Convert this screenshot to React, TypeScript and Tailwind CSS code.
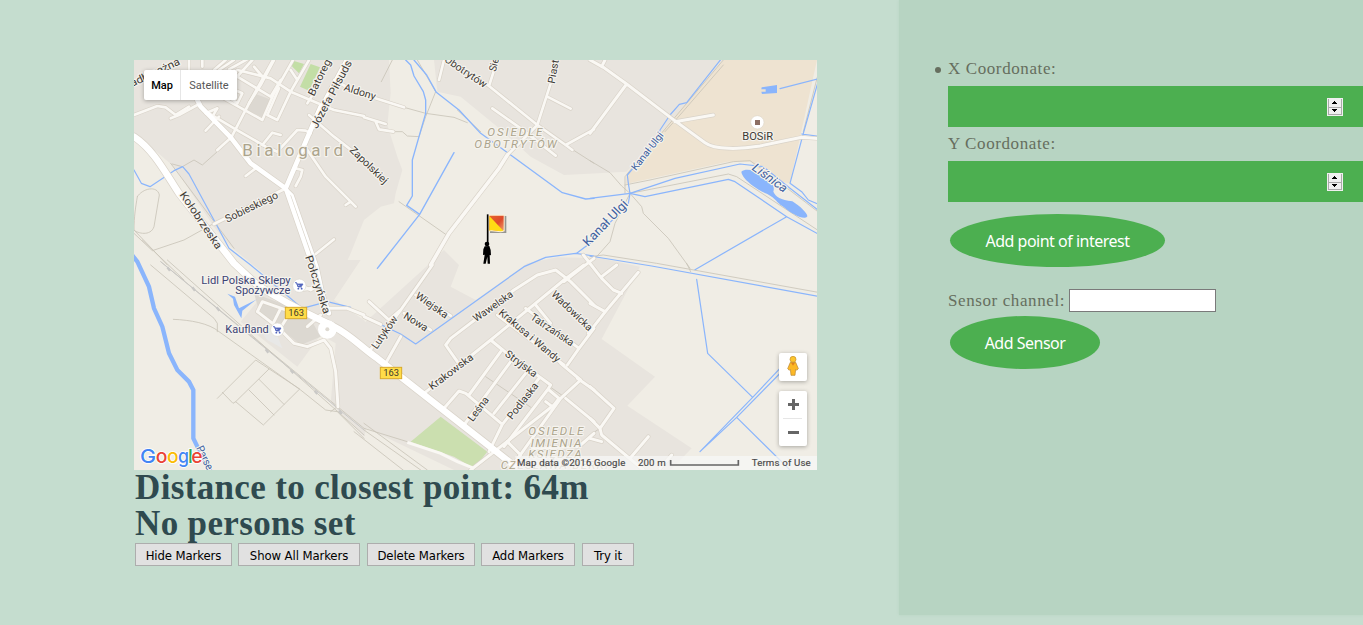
import React from "react";

type Tile = 1 | 2 | 3 | 4 | 5 | 6;
const shift: Record<Tile, string> = {
  1: "translate(0 0)",
  2: "translate(690 0)",
  3: "translate(1368 0)",
  4: "translate(0 615)",
  5: "translate(690 615)",
  6: "translate(1368 615)",
};

type Line = [Tile, number, string];

/* [tile, width, path] */
const roads: Line[] = [
  // north-west
  [1, 8, "M0 165L70 138L95 142L125 165L165 140"],
  [1, 8, "M110 175L135 165L190 135"],
  [1, 8, "M165 0V30"],
  [1, 8, "M205 20V-5M240 30L275 0M255 30L300 0M285 28L345 -5M300 60L355 0M215 160L250 145M215 212L255 170M250 145L235 170"],
  [1, 8, "M250 270L292 232L345 130L420 -5"],
  [1, 8, "M225 160L300 205L395 260L430 275L490 210L515 212L530 220"],
  [1, 8, "M385 255L415 218L440 225M260 110L385 180L420 100L480 -5M310 30L410 55L470 95L600 150L690 168"],
  [1, 8, "M345 130L380 75L420 0M400 165L430 180L470 95L525 0M310 50L410 110L440 60M270 100L310 130L325 100L280 80M390 55L360 20M470 95L490 60L470 30M400 165L435 85"],
  [1, 8, "M335 348L365 325M520 270L575 350L665 440M635 435L650 425M485 325L505 330L500 350L485 378"],
  [1, 8, "M520 130L545 90M525 165L600 230L690 300M600 60L655 90"],
  [1, 9, "M240 492L455 385"],
  [1, 8, "M545 582L600 538"],
  [2, 8, "M20 110L120 142M0 172L65 192M35 185L45 208L88 215M225 60L240 0"],
  [2, 8, "M240 -10L375 78L520 195L605 255L625 270M375 78L400 0M520 195L560 70L575 0M550 110L620 146M385 145L470 205L575 287M520 195L430 285M605 255L690 208"],
  [2, 11, "M430 285L405 325L255 520L200 615"],
  [3, 9, "M0 0L40 22L110 72L245 175L345 248C375 270 450 268 510 258L635 232L690 236M110 72L0 220M255 185L370 165M35 20L45 0"],
  // south-west
  [4, 9, "M535 70L490 75M370 140L385 110L470 140L445 180M370 140L435 190L480 235L520 245L570 225L590 250L605 320L612 425M560 150L520 185M420 170L440 130"],
  [4, 9, "M500 60L530 75L550 60M690 150L640 130L580 130"],
  [5, 9, "M0 155L50 178M15 260L110 135L205 0M65 295L110 215M110 135L75 165L15 110M155 90L260 152M120 145L200 195"],
  // south estate
  [5, 9, "M180 385L380 225L600 45L660 0M280 290L245 240L260 220L450 75L520 30L575 15L620 50L690 120M380 225L420 258L560 360L550 375L420 545"],
  [5, 9, "M240 430L285 378L305 385L415 478M315 390L410 260M300 480L440 290M390 445L485 325M375 560L415 478L525 340M545 410L565 425M555 375L585 400L570 420L320 615"],
  [5, 9, "M485 130L645 250M515 120L560 175M590 295L650 345L590 400L440 610M610 300L645 250L690 190M400 150L600 300M640 340L690 375M605 400L690 470M600 50L690 -20M650 540L690 505M505 550L640 545M470 570L430 530"],
  [6, 9, "M-5 205L50 135L145 22M-20 -30L35 40L70 75L95 85M35 35L80 0M0 115L45 140M0 365L72 430L30 490L35 510L160 615M0 460L30 490M0 520L35 530M120 580L175 515M210 610L245 570"],
];

const mainRoads: Line[] = [
  [1, 20, "M0 230C60 270 95 340 135 400L300 610L370 675C470 740 540 770 600 800C650 825 680 860 730 895L1100 1185L1150 1225"],
  [1, 14, "M180 100L200 140L290 232L350 310L455 385L530 210L560 140"],
  [1, 9, "M550 160L690 -100"],
  [1, 13, "M455 385L540 630L585 760"],
  [1, 8, "M455 385L475 405L550 620L580 760"],
];

const paths: Line[] = [
  [1, 2.5, "M115 312L145 320L180 300L205 315L250 275M0 520L55 572L150 540L240 490M110 310L300 565M10 410C25 385 70 375 76 405L60 500C50 530 10 520 0 510C0 470 5 440 10 410M0 510L100 615M25 540L150 660"],
  [2, 2.5, "M85 0L52 65M160 0L215 95L185 170L165 230L130 228L115 215L90 215M120 142L185 160L270 172L310 188M280 150L350 215M105 425L255 530M620 265L690 310"],
  [3, 2.5, "M0 302L60 338L95 378L120 400L155 440L160 460L235 535L300 625M120 400L75 490L60 545L20 590L-30 620M105 375L180 360L430 305L480 302L520 330L690 460M120 400L415 342L440 350L690 515M400 0L290 130L105 350V400M690 20L640 215M0 590L40 585L200 610L690 698M225 215L270 165L400 15"],
  [4, 2.5, "M50 0L240 160L250 175V200M80 -10L690 490M100 -15L690 510M118 163C170 165 225 175 255 200L500 375L575 435L610 440L690 520M250 400L365 285L497 372L388 480L305 410L297 415L265 382M305 410L405 312M345 375L420 450M375 343L450 418M590 440L610 425"],
  [5, 2.5, "M0 490L130 530M365 335L505 430M550 360L600 395M0 475L190 615M0 495L170 615M-30 500L130 625"],
  [6, 2.5, "M290 -5L302 20M0 510L30 490"],
];

const water: Line[] = [
  [1, 3.6, "M0 330L22 370L48 380L120 332L146 320L165 342L245 490L285 565L350 615L440 690L505 745L580 725L650 742"],
  [2, 4, "M125 0L140 15L150 48L178 95L185 120V160L145 300V408L128 436L167 463L270 278M167 463L48 615L40 625M150 0L188 45L217 97L285 150L350 220L440 285L595 398L665 417L690 415"],
  [3, 3.6, "M395 -5L290 128L268 133L240 165L210 210L205 235L112 345L115 370L120 400L0 415M120 400L115 430L0 550L-40 580M120 400L255 355L450 312L520 320L600 385L690 455M120 400L165 410L415 358L435 365L590 470L690 525M590 470L315 629M570 86L690 55M690 45L640 220L600 370L635 395L655 420L690 435M635 222L690 230M0 588L185 618L690 710"],
  [2, 3.6, "M690 588L635 580L545 592L480 620L155 852L110 822L0 770"],
  [6, 3.6, "M320 43L353 265L488 397M330 560L488 397L575 305M330 560L440 457L580 315M440 457L600 615"],
];

interface Label { t: Tile; x: number; y: number; r: number; s: number; w: number; text: string; c?: string; i?: boolean; b?: boolean }
const ink = "#3f3b36";
const blue = "#3d5fa0";
const taupe = "#aca48c";
const labels: Label[] = [
  { t: 1, x: 325, y: 289, r: 0, s: 51, w: 302, text: "Bialogard", c: taupe, b: true },
  { t: 1, x: -28, y: 91, r: -25, s: 32, w: 186, text: "Nadbrzeżna" },
  { t: 1, x: 280, y: 488, r: -26, s: 32, w: 172, text: "Sobieskiego" },
  { t: 1, x: 136, y: 404, r: 56, s: 32, w: 200, text: "Kołobrzeska" },
  { t: 1, x: 540, y: 110, r: -64, s: 31, w: 118, text: "Batoreg" },
  { t: 1, x: 549, y: 208, r: -62, s: 33, w: 226, text: "Józefa Piłsuds" },
  { t: 1, x: 628, y: 91, r: 17, s: 31, w: 98, text: "Aldony" },
  { t: 1, x: 645, y: 272, r: 44, s: 31, w: 146, text: "Zapolskiej" },
  { t: 1, x: 513, y: 590, r: 72, s: 32, w: 182, text: "Połczyńska" },
  { t: 2, x: 239, y: 3, r: 34, s: 31, w: 146, text: "Obotrytów" },
  { t: 2, x: 395, y: 36, r: -76, s: 31, w: 40, text: "Sie" },
  { t: 2, x: 572, y: 72, r: -80, s: 31, w: 72, text: "Piast" },
  { t: 2, x: 370, y: 228, r: 0, s: 35, w: 165, text: "OSIEDLE", c: taupe, i: true, b: true },
  { t: 2, x: 331, y: 263, r: 0, s: 35, w: 247, text: "OBOTRYTÓW", c: taupe, i: true, b: true },
  { t: 3, x: 138, y: 334, r: -52, s: 30, w: 137, text: "Kanał Ulgi", c: blue },
  { t: 3, x: -6, y: 561, r: -46, s: 38, w: 176, text: "Kanał Ulgi", c: blue },
  { t: 3, x: 484, y: 328, r: 36, s: 36, w: 121, text: "Liśnica", c: blue, i: true },
  { t: 3, x: 457, y: 239, r: 0, s: 34, w: 92, text: "BOSiR" },
  { t: 4, x: 202, y: 56, r: 0, s: 34, w: 268, text: "Lidl Polska Sklepy", c: "#3b4473" },
  { t: 4, x: 304, y: 88, r: 0, s: 34, w: 165, text: "Spożywcze", c: "#3b4473" },
  { t: 4, x: 274, y: 203, r: 0, s: 34, w: 130, text: "Kaufland", c: "#3b4473" },
  { t: 4, x: 186, y: 549, r: 64, s: 33, w: 76, text: "Parse", c: blue },
  { t: 5, x: 152, y: 97, r: 35, s: 31, w: 112, text: "Wiejska" },
  { t: 5, x: 116, y: 158, r: 32, s: 31, w: 80, text: "Nowa" },
  { t: 5, x: 38, y: 254, r: -55, s: 31, w: 112, text: "Lutyków" },
  { t: 5, x: 336, y: 172, r: -35, s: 31, w: 139, text: "Wawelska" },
  { t: 5, x: 402, y: 146, r: 40, s: 31, w: 230, text: "Krakusa i Wandy" },
  { t: 5, x: 560, y: 90, r: 44, s: 31, w: 158, text: "Wadowicka" },
  { t: 5, x: 497, y: 161, r: 34, s: 31, w: 150, text: "Tatrzańska" },
  { t: 5, x: 204, y: 376, r: -37, s: 31, w: 158, text: "Krakowska" },
  { t: 5, x: 421, y: 271, r: 37, s: 31, w: 112, text: "Stryjska" },
  { t: 5, x: 326, y: 472, r: -53, s: 31, w: 84, text: "Leśna" },
  { t: 5, x: 444, y: 466, r: -52, s: 31, w: 131, text: "Podlaska" },
  { t: 5, x: 493, y: 509, r: 0, s: 35, w: 165, text: "OSIEDLE", c: taupe, i: true, b: true },
  { t: 5, x: 500, y: 545, r: 0, s: 35, w: 152, text: "IMIENIA", c: taupe, i: true, b: true },
  { t: 5, x: 493, y: 580, r: 0, s: 35, w: 160, text: "KSIĘDZA", c: taupe, i: true, b: true },
  { t: 5, x: 410, y: 613, r: 0, s: 35, w: 322, text: "CZESŁAWA BERKI", c: taupe, i: true, b: true },
];

const Strokes = ({ lines, color, extra = 0 }: { lines: Line[]; color: string; extra?: number }) => (
  <g fill="none" stroke={color} strokeLinecap="round" strokeLinejoin="round">
    {lines.map(([t, w, d], i) => (
      <path key={i} d={d} transform={shift[t]} strokeWidth={w + extra} />
    ))}
  </g>
);

const Cart = ({ x, y }: { x: number; y: number }) => (
  <g transform={`translate(${x} ${y})`}>
    <circle r="20" fill="#fff" stroke="#ddd9d0" strokeWidth="2" />
    <path d="M-13 -9H-8L-4 4H8M-7 -5H11L7 1H-5Z" fill="#5265bd" stroke="#5265bd" strokeWidth="2.5" />
    <circle cx="-3" cy="9" r="2.8" fill="#5265bd" />
    <circle cx="7" cy="9" r="2.8" fill="#5265bd" />
  </g>
);

const Shield = ({ x, y }: { x: number; y: number }) => (
  <g>
    <rect x={x} y={y} width="64" height="34" fill="#ffdc48" stroke="#d9a928" strokeWidth="3" />
    <text x={x + 9} y={y + 27} fontSize="28" fill="#403a2c" textLength="47">163</text>
  </g>
);

function MapArt() {
  return (
    <svg viewBox="0 0 2049 1230" className="block h-[410px] w-[683px]" fontFamily="Roboto, sans-serif">
      <rect width="2049" height="1230" fill="#f0ede5" />
      <g fill="#e8e4de">
        <path d="M0 0H765L770 100L760 195L790 290L805 330L785 400L780 430L740 440L690 480L650 580L600 690L560 740L400 650L290 560L240 500L120 320L50 260L0 225Z" />
        <path d="M900 0L910 95L980 110L1090 200L1190 290L1290 345L1478 335L1583 215L1768 0Z" />
        <path d="M930 570L975 615L950 680L1025 720L1180 610L1270 592L1400 595L1518 620L1403 837L1563 950L1480 1037L1673 1165L1610 1230H960L690 1100L600 1010L610 850L730 900L690 790L860 635Z" />
        <path d="M500 600L680 600L600 720L690 780L760 900L690 1130L590 1030L605 850L560 825L490 920L320 785L390 700Z" />
      </g>
      <path d="M1768 0H2049L1968 370L1905 360L1850 305L1780 305L1475 372L1478 340L1583 215Z" fill="#eee3d1" />
      <path d="M470 0L510 12L495 40L475 20ZM530 12L558 22L525 92L498 80Z" fill="#c3dea6" />
      <path d="M365 102L408 118L390 175L340 150ZM360 700L440 730L520 760L560 830L500 855L440 805L380 770Z" fill="#dcd8d1" />
      <path d="M370 800L425 815L445 865L400 840Z" fill="#e8e8e7" />
      <path d="M920 1070L1060 1175L1020 1225L960 1190L830 1145Z" fill="#cbdfaf" />
      <Strokes lines={paths} color="#c9c4b8" />
      <g fill="none" stroke="#c9c8c6" strokeWidth="3">
        <path d="M80 605L690 1110" />
        <path d="M100 622l8 10M175 682l8 10M248 742l8 10M395 868l8 10M470 930l8 10M542 992l8 10M615 1052l8 10" strokeWidth="7" />
      </g>
      <Strokes lines={water} color="#8ab5fc" />
      <path d="M-6 585L10 605L45 680L60 745L85 800L105 880L130 930L165 965L178 990L178 1135L205 1190L230 1235" fill="none" stroke="#8ab5fc" strokeWidth="13" />
      <g fill="#8ab5fc">
        <path d="M1822 335C1835 324 1860 330 1880 343C1905 348 1925 375 1918 395C1925 410 1940 420 1975 424C2002 440 2025 466 2019 470C2010 480 1978 466 1945 438C1930 430 1925 415 1900 402C1875 392 1825 360 1822 335Z" />
        <path d="M1883 82L1929 75V99L1884 102L1882 95H1895V88H1882Z" />
        <path d="M280 701L303 710L315 745L368 718L325 752L322 775L300 735L297 716Z" />
      </g>
      <Strokes lines={roads} color="#d9d3c9" extra={4} />
      <Strokes lines={mainRoads} color="#d9d3c9" extra={4} />
      <Strokes lines={roads} color="#faf8f4" />
      <Strokes lines={mainRoads} color="#ffffff" />
      <path d="M820 1147L920 1180L970 1205L1020 1225" fill="none" stroke="#faf8f4" strokeWidth="9" />
      <circle cx="580" cy="808" r="28" fill="#fff" />
      <circle cx="580" cy="808" r="6" fill="#dedad2" />
      <g stroke="#f5f3ee" strokeWidth="7" strokeLinejoin="round" paintOrder="stroke">
        {labels.map((l, i) => (
          <text
            key={i}
            transform={`${shift[l.t]} translate(${l.x} ${l.y}) rotate(${l.r})`}
            fontSize={l.s}
            textLength={l.w}
            lengthAdjust={l.b ? "spacing" : "spacingAndGlyphs"}
            fill={l.c ?? ink}
            fontStyle={l.i ? "italic" : "normal"}
          >
            {l.text}
          </text>
        ))}
      </g>
      <Cart x={496} y={677} />
      <Cart x={430} y={809} />
      <Shield x={454} y={742} />
      <Shield x={739} y={922} />
      <circle cx="1870" cy="187" r="20" fill="#fff" stroke="#ded6c8" strokeWidth="2" />
      <rect x="1863" y="180" width="15" height="15" fill="#8d6e63" />
      {/* flag marker */}
      <defs>
        <linearGradient id="flagRed" x1="0" x2="1" y1="0" y2="1">
          <stop offset="0" stopColor="#e8642c" />
          <stop offset=".55" stopColor="#dd4a2c" />
          <stop offset="1" stopColor="#f2a06a" />
        </linearGradient>
      </defs>
      <path d="M1068 466L1117 468V519L1068 519Z" fill="#666" opacity=".65" />
      <path d="M1063 464H1112V514C1096 522 1080 510 1064 515Z" fill="#fff0d0" />
      <path d="M1066 467H1109V511C1096 517 1080 507 1066 511Z" fill="url(#flagRed)" />
      <path d="M1066 468L1108 512C1096 517 1080 507 1066 512Z" fill="#ffdc14" />
      <path d="M1061 463V552" stroke="#000" strokeWidth="5" />
      <circle cx="1059" cy="552" r="7" />
      <path d="M1052 559L1066 558L1070 570L1071 586L1067 585L1068 611H1061L1060 590L1055 611H1048L1052 584L1047 585L1048 568Z" />
      {/* logo */}
      <g fontFamily="Inter, sans-serif" fontSize="58" fontWeight="500" stroke="#fff" strokeWidth="5" paintOrder="stroke">
        <text x="18" y="1208" fill="#4285f4" textLength="48" lengthAdjust="spacingAndGlyphs">G</text>
        <text x="65" y="1208" fill="#ea4335">o</text>
        <text x="99" y="1208" fill="#fbbc05">o</text>
        <text x="132" y="1208" fill="#4285f4" textLength="33" lengthAdjust="spacingAndGlyphs">g</text>
        <text x="162" y="1208" fill="#34a853">l</text>
        <text x="172" y="1208" fill="#ea4335" textLength="34" lengthAdjust="spacingAndGlyphs">e</text>
      </g>
      {/* attribution strip */}
      <rect x="1144" y="1188" width="905" height="42" fill="#f7f7f6" opacity=".75" />
      <g fontSize="29" fill="#4a4a4a" stroke="#4a4a4a" strokeWidth=".5">
        <text x="1149" y="1217" textLength="325">Map data ©2016 Google</text>
        <text x="1512" y="1217" textLength="83">200 m</text>
        <text x="1853" y="1217" textLength="177">Terms of Use</text>
      </g>
      <path d="M1610 1200V1215H1813V1200" fill="none" stroke="#666" strokeWidth="5" />
    </svg>
  );
}

function MapPanel() {
  return (
    <div className="relative h-[410px] w-[683px] overflow-hidden">
      <MapArt />
      <div className="absolute left-[10px] top-[10px] flex h-[30px] rounded-[2px] bg-white font-[Roboto,sans-serif] text-[11px] leading-[31px] shadow-[0_1px_4px_rgba(0,0,0,0.3)]">
        <div className="w-[37px] border-r border-[#e6e6e6] text-center font-medium text-black">Map</div>
        <div className="w-[56px] text-center text-[#565656]">Satellite</div>
      </div>
      <div className="absolute right-[10px] top-[293px] flex h-7 w-7 items-center justify-center rounded-[2px] bg-white shadow-[0_1px_4px_rgba(0,0,0,0.3)]">
        <svg viewBox="0 0 36 60" className="mb-[2px] h-5 w-3">
          <path d="M10 19H26L34 38L29 43L26 40L24 58H12L10 40L7 43L2 38Z" fill="#fcb826" stroke="#b68430" strokeWidth="2" />
          <path d="M12 20L18 29L24 20Z" fill="#e0801e" />
          <circle cx="18" cy="10" r="9" fill="#fcc52d" stroke="#c38d2a" strokeWidth="2" />
        </svg>
      </div>
      <div className="absolute right-[10px] top-[331px] flex h-[55px] w-7 flex-col items-center rounded-[2px] bg-white shadow-[0_1px_4px_rgba(0,0,0,0.3)]">
        <svg viewBox="0 0 28 55" className="h-[55px] w-7">
          <path d="M9 13.5H20M14.5 8V19M9 41.5H20" stroke="#666" strokeWidth="3" />
          <path d="M4 27.5H23" stroke="#e6e6e6" />
        </svg>
      </div>
    </div>
  );
}

const markerButton =
  "h-[23px] border border-[#adadad] bg-[#e1e1e1] pt-px text-center font-['DejaVu_Sans_Condensed','DejaVu_Sans',sans-serif] text-[13px] leading-[21px] tracking-[-0.1px] whitespace-nowrap text-black";
const ovalButton =
  "ml-[2px] block h-[53px] rounded-[50%] bg-[#4caf50] text-center font-['Noto_Sans',sans-serif] text-[16px] tracking-[-0.5px] text-white whitespace-nowrap";

function Spinner() {
  return (
    <svg viewBox="0 0 16 18" className="h-[18px] w-4" shapeRendering="crispEdges">
      <rect width="16" height="18" fill="#f0f0f0" />
      <path d="M1.5 1V17M14.5 1V17M1 9H15M1 16.5H15" stroke="#aaa" strokeWidth="1" />
      <path d="M5 6H10V5H9V4H8V3H7V4H6V5H5ZM5 11H10V12H9V13H8V14H7V13H6V12H5Z" fill="#000" />
    </svg>
  );
}

function NumberField() {
  return (
    <div className="flex h-[41px] items-center justify-end bg-[#4caf50] pr-5">
      <Spinner />
    </div>
  );
}

export default function App() {
  return (
    <div className="flex h-[625px] w-full overflow-hidden bg-[#c5ddcf]">
      <main className="w-[899px] shrink-0 pl-[134px] pt-[60px]">
        <MapPanel />
        <div className="pl-px font-['Liberation_Serif',serif] text-[35px] font-bold leading-9 text-[#2f4a4f]">
          <h2 className="whitespace-nowrap tracking-[0.35px]">Distance to closest point: 64m</h2>
          <h2 className="whitespace-nowrap tracking-[0.35px]">No persons set</h2>
        </div>
        <div className="ml-px mt-px flex">
          <button className={`${markerButton} mr-[6px] w-[97px]`}>Hide Markers</button>
          <button className={`${markerButton} mr-[7px] w-[122px]`}>Show All Markers</button>
          <button className={`${markerButton} mr-[6px] w-[108px]`}>Delete Markers</button>
          <button className={`${markerButton} mr-[7px] w-[94px]`}>Add Markers</button>
          <button className={`${markerButton} w-[52px]`}>Try it</button>
        </div>
      </main>
      <aside className="h-[615px] flex-1 bg-[#b7d4c2] pl-[49px] pt-[51px] font-['Liberation_Serif',serif] text-[17px] tracking-[0.6px] text-[#666e5e] shadow-[0_0_3px_#b7d4c2]">
        <div className="relative h-[35px] leading-[35px]">
          <span className="absolute left-[-13px] top-[16px] h-[6px] w-[6px] rounded-full bg-[#666e5e]" />
          X Coordonate:
        </div>
        <NumberField />
        <div className="h-[34px] leading-[34px]">Y Coordonate:</div>
        <NumberField />
        <button className={`${ovalButton} mt-3 w-[215px]`}>Add point of interest</button>
        <label className="mt-[22px] flex h-[23px] items-center">
          <span className="w-[121px] whitespace-nowrap">Sensor channel:</span>
          <input className="h-[23px] w-[147px] border border-[#7a7a7a] bg-white" />
        </label>
        <button className={`${ovalButton} mt-1 w-[150px]`}>Add Sensor</button>
      </aside>
    </div>
  );
}
